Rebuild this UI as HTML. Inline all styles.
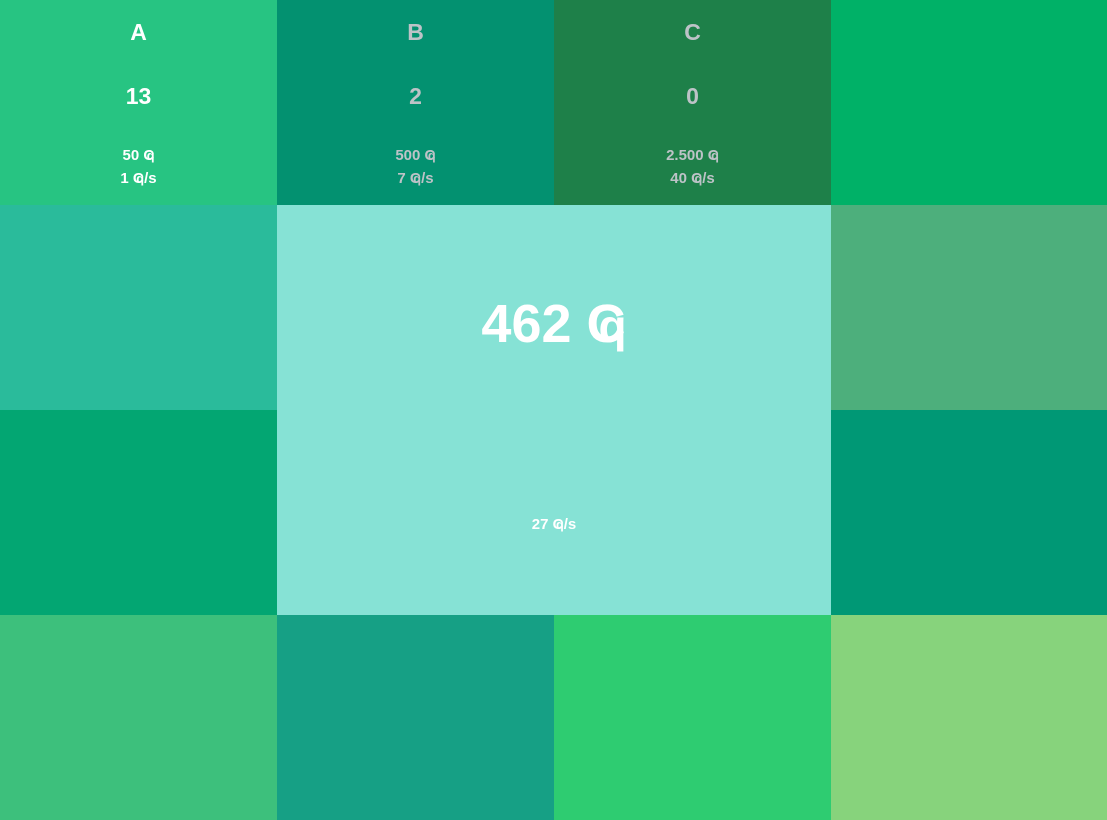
<!DOCTYPE html>
<html><head><style>
html,body{margin:0;padding:0;width:1107px;height:820px;overflow:hidden;font-family:"Liberation Sans",sans-serif;font-weight:bold}
.c{position:absolute;text-align:center}
.t{position:absolute;left:0;right:0;text-align:center;line-height:1}
.q{letter-spacing:-0.5em}
.s{font-size:0.85em}
</style></head><body>
<div class="c" style="left:0;top:0;width:277px;height:205px;background:#27c482;color:#fff">
<div class="t" style="top:21px;font-size:23px">A</div>
<div class="t" style="top:85px;font-size:23px">13</div>
<div class="t" style="top:148px;font-size:15px">50 <span class="q">C</span><span class="s">q</span></div>
<div class="t" style="top:171px;font-size:15px">1 <span class="q">C</span><span class="s">q</span>/s</div>
</div>
<div class="c" style="left:277px;top:0;width:277px;height:205px;background:#039170;color:#bdc3c7">
<div class="t" style="top:21px;font-size:23px">B</div>
<div class="t" style="top:85px;font-size:23px">2</div>
<div class="t" style="top:148px;font-size:15px">500 <span class="q">C</span><span class="s">q</span></div>
<div class="t" style="top:171px;font-size:15px">7 <span class="q">C</span><span class="s">q</span>/s</div>
</div>
<div class="c" style="left:554px;top:0;width:277px;height:205px;background:#1e8049;color:#bdc3c7">
<div class="t" style="top:21px;font-size:23px">C</div>
<div class="t" style="top:85px;font-size:23px">0</div>
<div class="t" style="top:148px;font-size:15px">2.500 <span class="q">C</span><span class="s">q</span></div>
<div class="t" style="top:171px;font-size:15px">40 <span class="q">C</span><span class="s">q</span>/s</div>
</div>
<div class="c" style="left:831px;top:0;width:276px;height:205px;background:#00b167"></div>
<div class="c" style="left:0;top:205px;width:277px;height:205px;background:#2abb9b"></div>
<div class="c" style="left:277px;top:205px;width:554px;height:410px;background:#86e2d5;color:#fff">
<div class="t" style="top:92px;font-size:54px">462 <span class="q">C</span><span class="s">q</span></div>
<div class="t" style="top:312px;font-size:15px">27 <span class="q">C</span><span class="s">q</span>/s</div>
</div>
<div class="c" style="left:831px;top:205px;width:276px;height:205px;background:#4daf7c"></div>
<div class="c" style="left:0;top:410px;width:277px;height:205px;background:#03a672"></div>
<div class="c" style="left:831px;top:410px;width:276px;height:205px;background:#009875"></div>
<div class="c" style="left:0;top:615px;width:277px;height:205px;background:#3dc07c"></div>
<div class="c" style="left:277px;top:615px;width:277px;height:205px;background:#16a085"></div>
<div class="c" style="left:554px;top:615px;width:277px;height:205px;background:#2ecc71"></div>
<div class="c" style="left:831px;top:615px;width:276px;height:205px;background:#87d37c"></div>
</body></html>
